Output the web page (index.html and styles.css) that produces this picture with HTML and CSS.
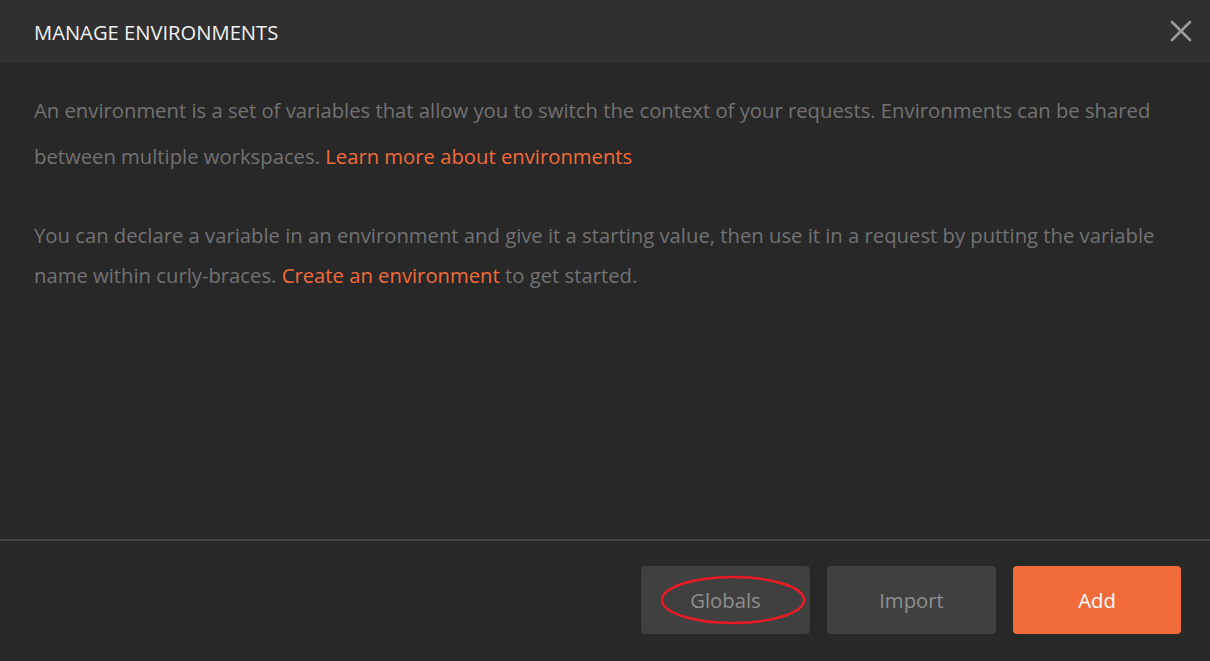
FILE: index.html
```html
<!DOCTYPE html>
<html>
<head>
<meta charset="utf-8">
<link rel="stylesheet" href="styles.css">
</head>
<body>
<div class="modal">
  <header class="modal-header">
    <h1 class="title">MANAGE ENVIRONMENTS</h1>
    <button class="close" aria-label="Close">
      <svg width="22" height="22" viewBox="0 0 22 22"><path d="M2 2 L20 20 M20 2 L2 20" stroke="#9b9b9b" stroke-width="2.6" stroke-linecap="round" fill="none"/></svg>
    </button>
  </header>
  <main class="modal-body">
    <p class="para para-first">An environment is a set of variables that allow you to switch the context of your requests. Environments can be shared between multiple workspaces. <a class="link" href="#">Learn more about environments</a></p>
    <p class="para para-second">You can declare a variable in an environment and give it a starting value, then use it in a request by putting the variable name within curly-braces. <a class="link" href="#">Create an environment</a> to get started.</p>
  </main>
  <footer class="modal-footer">
    <div class="btn-wrap">
      <button class="btn btn-secondary">Globals</button>
      <svg class="annot" width="150" height="52" viewBox="0 0 150 52"><ellipse cx="75" cy="26" rx="71" ry="23" fill="none" stroke="#ec1a24" stroke-width="2.4"/></svg>
    </div>
    <button class="btn btn-secondary">Import</button>
    <button class="btn btn-primary">Add</button>
  </footer>
</div>
</body>
</html>
```
FILE: styles.css
```css
html, body {
  margin: 0;
  padding: 0;
  background: #282828;
}
body {
  font-family: "Open Sans", "Liberation Sans", sans-serif;
  width: 1210px;
  height: 661px;
  overflow: hidden;
}
.modal {
  display: flex;
  flex-direction: column;
  height: 661px;
}
.modal-header {
  height: 63px;
  background: #303030;
  display: flex;
  align-items: center;
  justify-content: space-between;
  padding: 0 18px 0 34px;
  box-sizing: border-box;
  flex-shrink: 0;
}
.title {
  margin: 0;
  font-size: 20.2px;
  font-weight: 400;
  color: #f0f0f0;
  letter-spacing: 0;
}
.close {
  background: none;
  border: 0;
  padding: 0;
  width: 22px;
  height: 22px;
  display: flex;
  margin-top: -1px;
}
.modal-body {
  flex: 1;
  padding: 24px 34px 0 34px;
  box-sizing: border-box;
}
.para {
  margin: 0;
  font-size: 20.25px;
  color: #727272;
}
.para-first {
  line-height: 46px;
}
.para-second {
  line-height: 40px;
  margin-top: 36px;
}
.link {
  color: #f26b3a;
  text-decoration: none;
}
.modal-footer {
  height: 122px;
  border-top: 2px solid #444444;
  box-sizing: border-box;
  display: flex;
  justify-content: flex-end;
  align-items: flex-start;
  gap: 17px;
  padding: 25px 29px 0 0;
  flex-shrink: 0;
}
.btn-wrap {
  position: relative;
  display: flex;
}
.btn {
  width: 169px;
  height: 68px;
  border: 0;
  border-radius: 4px;
  font-family: "Open Sans", "Liberation Sans", sans-serif;
  font-size: 20.3px;
  padding: 0;
}
.btn-secondary {
  background: #404040;
  color: #8f8f8f;
}
.btn-primary {
  background: #f26b3a;
  color: #ffffff;
  width: 168px;
}
.annot {
  position: absolute;
  left: 17px;
  top: 8px;
  pointer-events: none;
}
```
